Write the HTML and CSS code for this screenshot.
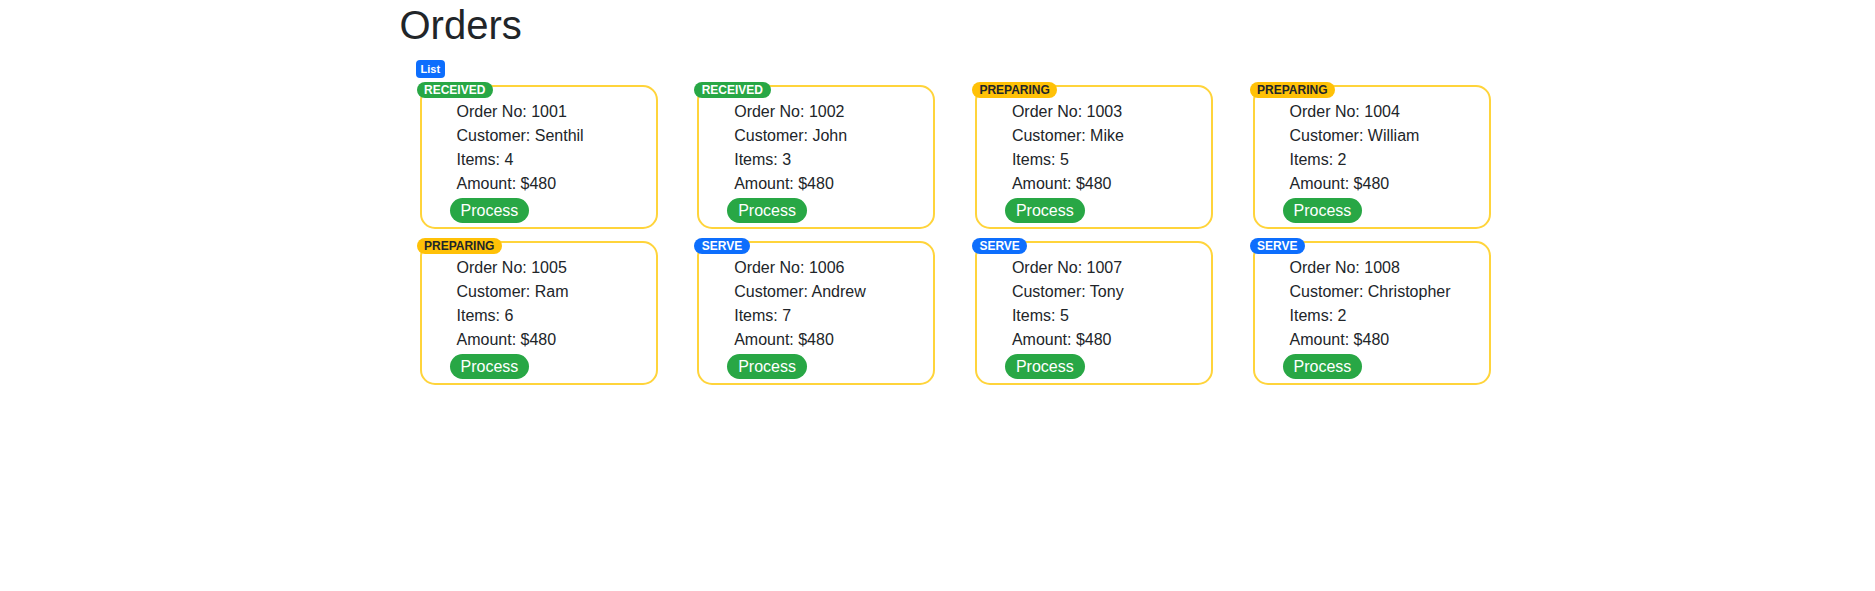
FILE: index.html
```html
<!DOCTYPE html>
<html lang="en">
<head>
<meta charset="utf-8">
<title>Orders</title>
<link rel="stylesheet" href="styles.css">
</head>
<body>
<div class="page">
  <h1 class="title">Orders</h1>
  <span class="list-badge">List</span>
  <div class="grid">
    <div class="card">
      <span class="status status-received">RECEIVED</span>
      <ul class="details"><li>Order No: 1001</li><li>Customer: Senthil</li><li>Items: 4</li><li>Amount: $480</li></ul>
      <button class="process">Process</button>
    </div>
    <div class="card">
      <span class="status status-received">RECEIVED</span>
      <ul class="details"><li>Order No: 1002</li><li>Customer: John</li><li>Items: 3</li><li>Amount: $480</li></ul>
      <button class="process">Process</button>
    </div>
    <div class="card">
      <span class="status status-preparing">PREPARING</span>
      <ul class="details"><li>Order No: 1003</li><li>Customer: Mike</li><li>Items: 5</li><li>Amount: $480</li></ul>
      <button class="process">Process</button>
    </div>
    <div class="card">
      <span class="status status-preparing">PREPARING</span>
      <ul class="details"><li>Order No: 1004</li><li>Customer: William</li><li>Items: 2</li><li>Amount: $480</li></ul>
      <button class="process">Process</button>
    </div>
    <div class="card">
      <span class="status status-preparing">PREPARING</span>
      <ul class="details"><li>Order No: 1005</li><li>Customer: Ram</li><li>Items: 6</li><li>Amount: $480</li></ul>
      <button class="process">Process</button>
    </div>
    <div class="card">
      <span class="status status-serve">SERVE</span>
      <ul class="details"><li>Order No: 1006</li><li>Customer: Andrew</li><li>Items: 7</li><li>Amount: $480</li></ul>
      <button class="process">Process</button>
    </div>
    <div class="card">
      <span class="status status-serve">SERVE</span>
      <ul class="details"><li>Order No: 1007</li><li>Customer: Tony</li><li>Items: 5</li><li>Amount: $480</li></ul>
      <button class="process">Process</button>
    </div>
    <div class="card">
      <span class="status status-serve">SERVE</span>
      <ul class="details"><li>Order No: 1008</li><li>Customer: Christopher</li><li>Items: 2</li><li>Amount: $480</li></ul>
      <button class="process">Process</button>
    </div>
  </div>
</div>
</body>
</html>
```
FILE: styles.css
```css
* { box-sizing: border-box; }
html, body { margin: 0; padding: 0; background: #fff; }
body {
  font-family: "Liberation Sans", Arial, sans-serif;
  font-size: 16px;
  line-height: 24px;
  color: #212529;
}
.page {
  width: 1140px;
  margin: 0 auto;
  padding-left: 32px;
  padding-top: 1px;
}
.title {
  margin: 0;
  font-size: 40px;
  font-weight: 400;
  line-height: 48px;
}
.list-badge {
  display: inline-block;
  margin-top: 11px;
  margin-left: 16px;
  height: 18px;
  padding: 0 5px;
  font-size: 11px;
  line-height: 18px;
  font-weight: 700;
  color: #fff;
  background: #0d6efd;
  border-radius: 4px;
  vertical-align: top;
}
.grid {
  display: grid;
  grid-template-columns: repeat(4, 277.7px);
  row-gap: 12px;
  margin-top: 7px;
  margin-left: 20px;
}
.card {
  position: relative;
  width: 238px;
  border: 2px solid #ffd43b;
  border-radius: 15px;
  padding: 13px 0 4px 28px;
}
.status {
  position: absolute;
  left: -5px;
  top: -5px;
  height: 16px;
  padding: 0 7.5px;
  font-size: 12px;
  line-height: 16px;
  font-weight: 700;
  border-radius: 8px;
  white-space: nowrap;
}
.status-received { background: #28a745; color: #fff; }
.status-preparing { background: #ffc107; color: #212529; }
.status-serve { background: #0d6efd; color: #fff; }
.details {
  list-style: none;
  margin: 0;
  padding: 0 0 0 7px;
}
.details li { height: 24px; }
.process {
  display: block;
  margin-top: 2px;
  height: 25px;
  padding: 0 11px;
  border: none;
  border-radius: 13px;
  background: #28a745;
  color: #fff;
  font-family: "Liberation Sans", Arial, sans-serif;
  font-size: 16px;
  line-height: 25px;
}
```
